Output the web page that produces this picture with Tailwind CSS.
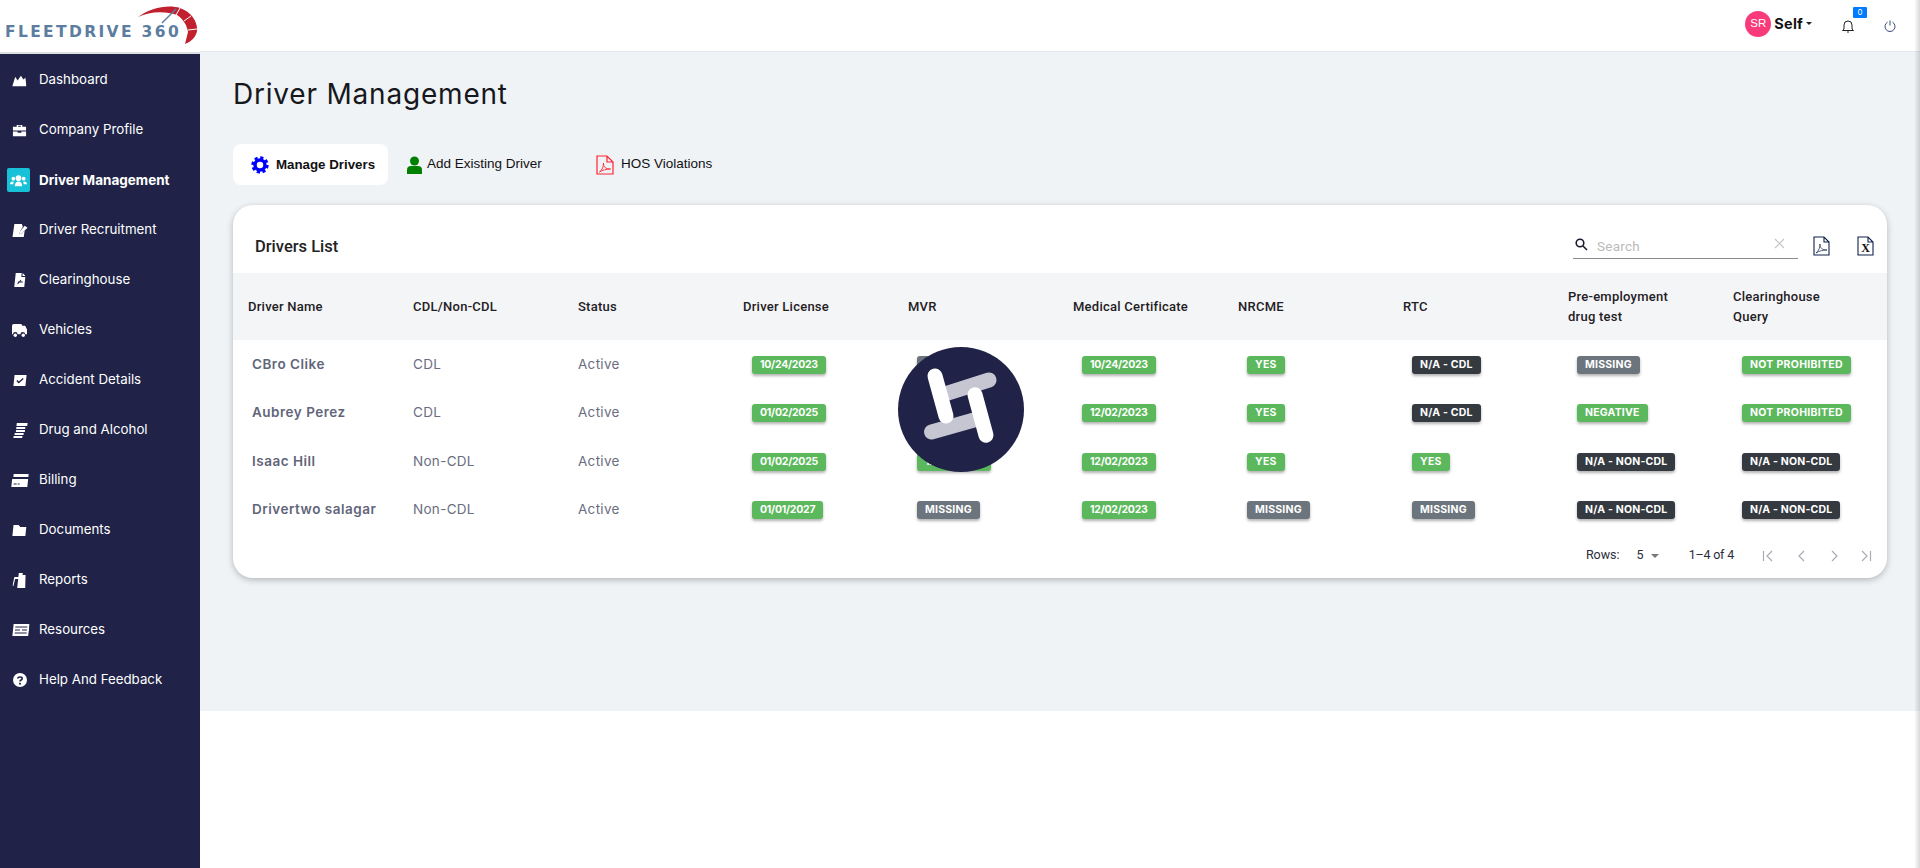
<!DOCTYPE html>
<html lang="en">
<head>
  <meta charset="UTF-8">
  <title>Driver Management</title>
  <script src="https://cdn.jsdelivr.net/npm/@tailwindcss/browser@4"></script>
</head>
<body class="bg-white font-['Inter',sans-serif] overflow-hidden">
  <div class="flex h-[868px] w-[1920px] relative">

    <!-- left column -->
    <div class="w-[200px] shrink-0 flex flex-col">
      <div class="h-[54px] border-b-2 border-[#dcdfe4] bg-white relative">
        <span class="absolute left-[5px] top-[24px] font-['DejaVu_Sans',sans-serif] font-bold text-[15.5px] leading-[16px] tracking-[2.35px] text-[#5c7d9f] whitespace-nowrap">FLEETDRIVE 360</span>
        <svg class="absolute left-[136px] top-[5px]" width="62" height="42" viewBox="0 0 62 42" fill="none">
          <path d="M2 12 C14 3 32 -1 44 3 C56 7 62 18 61 26 C60 32 55 37 49 39 L52 27 C51 20 47 14 41 10 C30 6 14 6 2 12Z" fill="#c1202f"/>
          <path d="M40 4 L26 18" stroke="#5c7d9f" stroke-width="1.500"/>
          <path d="M44 3 L40 10 M55 11 L48 16 M61 24 L52 25" stroke="#fff" stroke-width="1"/>
        </svg>
      </div>
      <nav class="flex-1 bg-[#202347] pt-px text-white text-[13.3px]">
        <a class="flex items-center h-[50px]">
          <span class="w-[39px] pl-[12px]"><svg class="w-[15px] h-[15px] -skew-x-6" viewBox="0 0 16 16" fill="#fff"><path d="M1 14 L3 4 L6 8 L9 3 L12 7 L14 5 L16 14Z"/></svg></span>Dashboard
        </a>
        <a class="flex items-center h-[50px]">
          <span class="w-[39px] pl-[12px]"><svg class="w-[15px] h-[15px]" viewBox="0 0 16 16" fill="#fff"><path d="M5 4V2h6v2h4v4H1V4zM6.500 4h3V3h-3zM1 9h5v1.500h4V9h5v5H1z"/></svg></span>Company Profile
        </a>
        <a class="flex items-center h-[50px] font-bold text-[13.5px]">
          <span class="w-[39px] pl-[7px]"><span class="flex w-[23px] h-[24px] rounded-[2px] bg-[#17c1d8] items-center justify-center"><svg class="w-[17px] h-[15px]" viewBox="0 0 18 16" fill="#fff"><circle cx="9" cy="5.500" r="3"/><circle cx="3.500" cy="6" r="2"/><circle cx="14.500" cy="6" r="2"/><path d="M5 14c0-3 1.500-5 4-5s4 2 4 5zM0 12c0-2 1-3 3-3l1 .5C3.500 10.500 3.500 11 3.500 12zM18 12c0-2-1-3-3-3l-1 .5c.5 1 .5 1.500.5 2.500z"/></svg></span></span>Driver Management
        </a>
        <a class="flex items-center h-[50px]">
          <span class="w-[39px] pl-[11px]"><svg class="w-[18px] h-[15px]" viewBox="0 0 18 16" fill="#fff"><path d="M3 1h8l1 3-3 5-1 3 3-1 3-3-1 7H1z"/><path d="M14 3l3 2-6 6-3 1 1-3z"/></svg></span>Driver Recruitment
        </a>
        <a class="flex items-center h-[50px]">
          <span class="w-[39px] pl-[13px]"><svg class="w-[14px] h-[16px] -skew-x-6" viewBox="0 0 14 16" fill="#fff"><path d="M2 1h6v4h4v10H2zM9 1l3 3H9z"/><path d="M5 12l3-4M5 10h5" stroke="#202347"/></svg></span>Clearinghouse
        </a>
        <a class="flex items-center h-[50px]">
          <span class="w-[39px] pl-[11px]"><svg class="w-[17px] h-[15px]" viewBox="0 0 18 16" fill="#fff"><path d="M1 3q0-2 2-2h7q2 0 2 2h3l2 4v5h-2a2.500 2.500 0 0 0-5 0H7a2.500 2.500 0 0 0-5 0H1z"/><circle cx="4.500" cy="13" r="1.800"/><circle cx="13" cy="13" r="1.800"/></svg></span>Vehicles
        </a>
        <a class="flex items-center h-[50px]">
          <span class="w-[39px] pl-[13px]"><svg class="w-[14px] h-[13px] -skew-x-6" viewBox="0 0 14 13" fill="#fff"><path d="M1 1h12v11H1z"/><path d="M4 6.500l2 2 4-4" stroke="#202347" stroke-width="1.500" fill="none"/></svg></span>Accident Details
        </a>
        <a class="flex items-center h-[50px]">
          <span class="w-[39px] pl-[14px]"><svg class="w-[13px] h-[15px] -skew-x-6" viewBox="0 0 13 15" fill="#fff"><path d="M2 0h11v3H2zM2 4h9v2H2zM2 7h9v2H2zM1 10h9v2H1zM0 13h9v2H0z"/></svg></span>Drug and Alcohol
        </a>
        <a class="flex items-center h-[50px]">
          <span class="w-[39px] pl-[11px]"><svg class="w-[18px] h-[13px] -skew-x-6" viewBox="0 0 18 13" fill="#fff"><path d="M2 0h15v3H2zM1 5h16v8H1z"/><path d="M3 10h3M7 10h2" stroke="#202347"/></svg></span>Billing
        </a>
        <a class="flex items-center h-[50px]">
          <span class="w-[39px] pl-[12px]"><svg class="w-[15px] h-[12px] -skew-x-6" viewBox="0 0 15 12" fill="#fff"><path d="M1 1h5l2 2h6v9H1z"/></svg></span>Documents
        </a>
        <a class="flex items-center h-[50px]">
          <span class="w-[39px] pl-[13px]"><svg class="w-[14px] h-[15px] -skew-x-6" viewBox="0 0 14 15" fill="#fff"><path d="M5 0h4v2h3l1 13H5V6H2l-1 7H0l1-9h4z"/></svg></span>Reports
        </a>
        <a class="flex items-center h-[50px]">
          <span class="w-[39px] pl-[12px]"><svg class="w-[17px] h-[12px] -skew-x-6" viewBox="0 0 17 12" fill="#fff"><path d="M1 0h16v12H1z"/><path d="M3 3h12M3 6h5M10 6h5M3 9h12" stroke="#202347"/></svg></span>Resources
        </a>
        <a class="flex items-center h-[50px]">
          <span class="w-[39px] pl-[13px]"><svg class="w-[14px] h-[14px]" viewBox="0 0 14 14"><circle cx="7" cy="7" r="7" fill="#fff"/><path d="M4.800 5.500C5 3.500 9.200 3.500 9.200 5.500 9.200 7 7 7 7 8.500" stroke="#202347" stroke-width="1.600" fill="none"/><rect x="6.100" y="9.800" width="1.800" height="1.800" fill="#202347"/></svg></span>Help And Feedback
        </a>
      </nav>
    </div>

    <!-- right column -->
    <div class="flex-1 flex flex-col min-w-0">
      <header class="h-[52px] shrink-0 bg-white border-b border-[#e3e7ee] flex items-center justify-end pr-[24px]">
        <span class="w-[26px] h-[26px] rounded-full bg-[#f93b7a] text-white text-[11.5px] font-['Liberation_Sans',sans-serif] flex items-center justify-center mb-[4px]">SR</span>
        <span class="ml-[3px] text-[14.5px] font-bold text-[#111] tracking-[0.2px] mb-[4px]">Self</span>
        <span class="ml-[3px] mb-[4px] border-x-[3px] border-x-transparent border-t-[3px] border-t-[#222]"></span>
        <span class="relative ml-[30px] w-[12px] h-[14px]">
          <svg class="w-[12px] h-[14px]" viewBox="0 0 12 14" fill="none" stroke="#222" stroke-width="1"><path d="M2 10V6a4 4 0 0 1 8 0v4l1.500 1.500h-11zM5 13h2"/></svg>
          <span class="absolute left-[11px] top-[-12px] w-[14px] h-[11px] rounded-[1px] bg-[#007bff] text-white text-[8px] leading-[11px] text-center">0</span>
        </span>
        <svg class="ml-[30px] w-[12px] h-[12px]" viewBox="0 0 12 12" fill="none" stroke="#3c4a80" stroke-width="1"><path d="M3.500 2.200a5 5 0 1 0 5 0M6 .5v5"/></svg>
      </header>

      <main class="h-[659px] shrink-0 bg-[#f0f3f6] pl-[33px] pr-[33px]">
        <h1 class="mt-[26px] h-[32px] text-[28px] leading-[32px] text-[#16181d] tracking-[0.8px]">Driver Management</h1>

        <div class="mt-[34px] flex items-center font-['Liberation_Sans',sans-serif] text-[13.5px] text-[#111] h-[41px]">
          <span class="w-[155px] h-[41px] rounded-[8px] bg-white flex items-center pl-[18px] font-semibold text-[13.3px]">
            <svg class="w-[18px] h-[18px] mr-[7px]" viewBox="0 0 18 18" fill="none" stroke="#0000ff"><circle cx="9" cy="9" r="5" stroke-width="3.500"/><circle cx="9" cy="9" r="7.400" stroke-width="2.600" stroke-dasharray="3.200 2.610"/></svg>Manage Drivers
          </span>
          <span class="w-[208px] flex items-center pl-[19px]">
            <svg class="w-[15px] h-[18px] mr-[5px]" viewBox="0 0 15 18" fill="#008000"><circle cx="7.500" cy="5" r="4.500"/><path d="M0 18v-4q0-4 4-4h7q4 0 4 4v4z"/></svg>Add Existing Driver
          </span>
          <span class="flex items-center">
            <svg class="w-[18px] h-[20px] mr-[7px]" viewBox="0 0 18 20" fill="none" stroke="#ff2330" stroke-width="1.200"><path d="M1 1h10l6 6v12H1zM11 1v6h6"/><path d="M3.500 17c3-2 4-6 4-9 0 4 2 6 7 6-4 0-8 1-11 3z" stroke-width="0.900"/></svg>HOS Violations
          </span>
        </div>

        <section class="mt-[20px] h-[373px] rounded-[20px] bg-white shadow-[0_2px_6px_rgba(0,0,0,0.25)] flex flex-col overflow-hidden">
          <div class="h-[68px] shrink-0 flex items-center justify-between pl-[22px] pr-[13px]">
            <h2 class="font-['Roboto',sans-serif] font-medium text-[16.5px] text-[#222] mt-[17px]">Drivers List</h2>
            <div class="flex items-center mt-[15px] h-[24px]">
              <div class="w-[225px] h-[24px] border-b border-[#8a8a8a] flex items-center font-['Roboto',sans-serif] text-[13.5px] text-[#bbb] tracking-[0.25px] relative">
                <svg class="ml-[2px] mr-[9px] w-[13px] h-[13px] mt-[-4px]" viewBox="0 0 13 13" fill="none" stroke="#1a1a2e" stroke-width="1.600"><circle cx="5" cy="5" r="3.800"/><path d="M8 8l4 4"/></svg>
                <span>Search</span>
                <svg class="absolute right-[13px] top-[3px] w-[11px] h-[11px]" viewBox="0 0 11 11" stroke="#c4c4c4" stroke-width="1.200"><path d="M1 1l9 9M10 1l-9 9"/></svg>
              </div>
              <svg class="ml-[15px] mt-[-1px] w-[17px] h-[20px]" viewBox="0 0 17 20" fill="none" stroke="#10204a" stroke-width="1.100"><path d="M1 1h10l5 5v13H1zM11 1v5h5"/><path d="M3 17c3-2 4-6 4-9 0 4 2 6 7 6-4 0-8 1-11 3z" stroke-width="0.700"/></svg>
              <span class="ml-[27px] mt-[-1px] relative w-[17px] h-[20px]">
                <svg class="w-[17px] h-[20px]" viewBox="0 0 17 20" fill="none" stroke="#10204a" stroke-width="1.100"><path d="M1 1h10l5 5v13H1zM11 1v5h5"/></svg>
                <span class="absolute left-0 right-0 top-[6px] text-center font-['Liberation_Serif',serif] font-bold text-[12px] leading-[12px] text-[#111]">X</span>
              </span>
            </div>
          </div>

          <div class="h-[67px] shrink-0 bg-[#f4f5f7] grid grid-cols-[repeat(10,165px)] items-center pl-[15px] font-['Roboto',sans-serif] font-medium text-[13px] leading-[20px] tracking-[0.25px] text-[#1f2024]">
            <span>Driver Name</span><span>CDL/Non-CDL</span><span>Status</span><span>Driver License</span><span>MVR</span><span>Medical Certificate</span><span>NRCME</span><span>RTC</span><span>Pre-employment<br>drug test</span><span>Clearinghouse<br>Query</span>
          </div>

          <div class="grid grid-cols-[repeat(10,165px)] auto-rows-[48.3px] items-center pl-[15px] text-[13.5px] tracking-[0.3px] text-[#6a6e80]">
            <span class="pl-[4px] font-semibold tracking-[0.5px] text-[#61657a]">CBro Clike</span><span>CDL</span><span>Active</span>
            <span class="pl-[9px] flex mt-[2px]"><b class="h-[18px] px-[8px] rounded-[3px] bg-[#5cb85c] text-white text-[10.5px] leading-[18px] font-bold shadow-[0_2px_3px_rgba(0,0,0,0.3)] tracking-[-0.25px]">10/24/2023</b></span>
            <span class="pl-[9px] flex mt-[2px]"><b class="h-[18px] px-[8px] rounded-[3px] bg-[#6c757d] text-white text-[10.5px] leading-[18px] font-bold shadow-[0_2px_3px_rgba(0,0,0,0.3)] tracking-[0.2px]">MISSING</b></span>
            <span class="pl-[9px] flex mt-[2px]"><b class="h-[18px] px-[8px] rounded-[3px] bg-[#5cb85c] text-white text-[10.5px] leading-[18px] font-bold shadow-[0_2px_3px_rgba(0,0,0,0.3)] tracking-[-0.25px]">10/24/2023</b></span>
            <span class="pl-[9px] flex mt-[2px]"><b class="h-[18px] px-[8px] rounded-[3px] bg-[#5cb85c] text-white text-[10.5px] leading-[18px] font-bold shadow-[0_2px_3px_rgba(0,0,0,0.3)] tracking-[0.2px]">YES</b></span>
            <span class="pl-[9px] flex mt-[2px]"><b class="h-[18px] px-[8px] rounded-[3px] bg-[#343a40] text-white text-[10.5px] leading-[18px] font-bold shadow-[0_2px_3px_rgba(0,0,0,0.3)] tracking-[0.2px]">N/A - CDL</b></span>
            <span class="pl-[9px] flex mt-[2px]"><b class="h-[18px] px-[8px] rounded-[3px] bg-[#6c757d] text-white text-[10.5px] leading-[18px] font-bold shadow-[0_2px_3px_rgba(0,0,0,0.3)] tracking-[0.2px]">MISSING</b></span>
            <span class="pl-[9px] flex mt-[2px]"><b class="h-[18px] px-[8px] rounded-[3px] bg-[#5cb85c] text-white text-[10.5px] leading-[18px] font-bold shadow-[0_2px_3px_rgba(0,0,0,0.3)] tracking-[0.3px]">NOT PROHIBITED</b></span>

            <span class="pl-[4px] font-semibold tracking-[0.5px] text-[#61657a]">Aubrey Perez</span><span>CDL</span><span>Active</span>
            <span class="pl-[9px] flex mt-[2px]"><b class="h-[18px] px-[8px] rounded-[3px] bg-[#5cb85c] text-white text-[10.5px] leading-[18px] font-bold shadow-[0_2px_3px_rgba(0,0,0,0.3)] tracking-[-0.25px]">01/02/2025</b></span>
            <span class="pl-[9px] flex mt-[2px]"><b class="h-[18px] px-[8px] rounded-[3px] bg-[#5cb85c] text-white text-[10.5px] leading-[18px] font-bold shadow-[0_2px_3px_rgba(0,0,0,0.3)] tracking-[-0.25px]">12/02/2023</b></span>
            <span class="pl-[9px] flex mt-[2px]"><b class="h-[18px] px-[8px] rounded-[3px] bg-[#5cb85c] text-white text-[10.5px] leading-[18px] font-bold shadow-[0_2px_3px_rgba(0,0,0,0.3)] tracking-[-0.25px]">12/02/2023</b></span>
            <span class="pl-[9px] flex mt-[2px]"><b class="h-[18px] px-[8px] rounded-[3px] bg-[#5cb85c] text-white text-[10.5px] leading-[18px] font-bold shadow-[0_2px_3px_rgba(0,0,0,0.3)] tracking-[0.2px]">YES</b></span>
            <span class="pl-[9px] flex mt-[2px]"><b class="h-[18px] px-[8px] rounded-[3px] bg-[#343a40] text-white text-[10.5px] leading-[18px] font-bold shadow-[0_2px_3px_rgba(0,0,0,0.3)] tracking-[0.2px]">N/A - CDL</b></span>
            <span class="pl-[9px] flex mt-[2px]"><b class="h-[18px] px-[8px] rounded-[3px] bg-[#5cb85c] text-white text-[10.5px] leading-[18px] font-bold shadow-[0_2px_3px_rgba(0,0,0,0.3)] tracking-[0.2px]">NEGATIVE</b></span>
            <span class="pl-[9px] flex mt-[2px]"><b class="h-[18px] px-[8px] rounded-[3px] bg-[#5cb85c] text-white text-[10.5px] leading-[18px] font-bold shadow-[0_2px_3px_rgba(0,0,0,0.3)] tracking-[0.3px]">NOT PROHIBITED</b></span>

            <span class="pl-[4px] font-semibold tracking-[0.5px] text-[#61657a]">Isaac Hill</span><span>Non-CDL</span><span>Active</span>
            <span class="pl-[9px] flex mt-[2px]"><b class="h-[18px] px-[8px] rounded-[3px] bg-[#5cb85c] text-white text-[10.5px] leading-[18px] font-bold shadow-[0_2px_3px_rgba(0,0,0,0.3)] tracking-[-0.25px]">01/02/2025</b></span>
            <span class="pl-[9px] flex mt-[2px]"><b class="h-[18px] px-[8px] rounded-[3px] bg-[#5cb85c] text-white text-[10.5px] leading-[18px] font-bold shadow-[0_2px_3px_rgba(0,0,0,0.3)] tracking-[-0.25px]">12/02/2023</b></span>
            <span class="pl-[9px] flex mt-[2px]"><b class="h-[18px] px-[8px] rounded-[3px] bg-[#5cb85c] text-white text-[10.5px] leading-[18px] font-bold shadow-[0_2px_3px_rgba(0,0,0,0.3)] tracking-[-0.25px]">12/02/2023</b></span>
            <span class="pl-[9px] flex mt-[2px]"><b class="h-[18px] px-[8px] rounded-[3px] bg-[#5cb85c] text-white text-[10.5px] leading-[18px] font-bold shadow-[0_2px_3px_rgba(0,0,0,0.3)] tracking-[0.2px]">YES</b></span>
            <span class="pl-[9px] flex mt-[2px]"><b class="h-[18px] px-[8px] rounded-[3px] bg-[#5cb85c] text-white text-[10.5px] leading-[18px] font-bold shadow-[0_2px_3px_rgba(0,0,0,0.3)] tracking-[0.2px]">YES</b></span>
            <span class="pl-[9px] flex mt-[2px]"><b class="h-[18px] px-[8px] rounded-[3px] bg-[#343a40] text-white text-[10.5px] leading-[18px] font-bold shadow-[0_2px_3px_rgba(0,0,0,0.3)] tracking-[0.2px]">N/A - NON-CDL</b></span>
            <span class="pl-[9px] flex mt-[2px]"><b class="h-[18px] px-[8px] rounded-[3px] bg-[#343a40] text-white text-[10.5px] leading-[18px] font-bold shadow-[0_2px_3px_rgba(0,0,0,0.3)] tracking-[0.2px]">N/A - NON-CDL</b></span>

            <span class="pl-[4px] font-semibold tracking-[0.5px] text-[#61657a]">Drivertwo salagar</span><span>Non-CDL</span><span>Active</span>
            <span class="pl-[9px] flex mt-[2px]"><b class="h-[18px] px-[8px] rounded-[3px] bg-[#5cb85c] text-white text-[10.5px] leading-[18px] font-bold shadow-[0_2px_3px_rgba(0,0,0,0.3)] tracking-[-0.25px]">01/01/2027</b></span>
            <span class="pl-[9px] flex mt-[2px]"><b class="h-[18px] px-[8px] rounded-[3px] bg-[#6c757d] text-white text-[10.5px] leading-[18px] font-bold shadow-[0_2px_3px_rgba(0,0,0,0.3)] tracking-[0.2px]">MISSING</b></span>
            <span class="pl-[9px] flex mt-[2px]"><b class="h-[18px] px-[8px] rounded-[3px] bg-[#5cb85c] text-white text-[10.5px] leading-[18px] font-bold shadow-[0_2px_3px_rgba(0,0,0,0.3)] tracking-[-0.25px]">12/02/2023</b></span>
            <span class="pl-[9px] flex mt-[2px]"><b class="h-[18px] px-[8px] rounded-[3px] bg-[#6c757d] text-white text-[10.5px] leading-[18px] font-bold shadow-[0_2px_3px_rgba(0,0,0,0.3)] tracking-[0.2px]">MISSING</b></span>
            <span class="pl-[9px] flex mt-[2px]"><b class="h-[18px] px-[8px] rounded-[3px] bg-[#6c757d] text-white text-[10.5px] leading-[18px] font-bold shadow-[0_2px_3px_rgba(0,0,0,0.3)] tracking-[0.2px]">MISSING</b></span>
            <span class="pl-[9px] flex mt-[2px]"><b class="h-[18px] px-[8px] rounded-[3px] bg-[#343a40] text-white text-[10.5px] leading-[18px] font-bold shadow-[0_2px_3px_rgba(0,0,0,0.3)] tracking-[0.2px]">N/A - NON-CDL</b></span>
            <span class="pl-[9px] flex mt-[2px]"><b class="h-[18px] px-[8px] rounded-[3px] bg-[#343a40] text-white text-[10.5px] leading-[18px] font-bold shadow-[0_2px_3px_rgba(0,0,0,0.3)] tracking-[0.2px]">N/A - NON-CDL</b></span>
          </div>

          <div class="mt-[13px] flex items-center justify-end pr-[15px] font-['Roboto',sans-serif] text-[12.5px] text-[#2a2d3a]">
            <span>Rows:</span>
            <span class="ml-[17px]">5</span>
            <span class="ml-[7px] mr-[30px] border-x-[4px] border-x-transparent border-t-[4px] border-t-[#777]"></span>
            <span class="mr-[28px] tracking-[-0.2px]">1–4 of 4</span>
            <svg class="w-[12px] h-[12px] mr-[23px]" viewBox="0 0 12 12" fill="none" stroke="#a9abb3" stroke-width="1.200"><path d="M1.500 1v10M10 1L5 6l5 5"/></svg>
            <svg class="w-[8px] h-[12px] mr-[26px]" viewBox="0 0 8 12" fill="none" stroke="#a9abb3" stroke-width="1.200"><path d="M7 1L2 6l5 5"/></svg>
            <svg class="w-[8px] h-[12px] mr-[21px]" viewBox="0 0 8 12" fill="none" stroke="#a9abb3" stroke-width="1.200"><path d="M1 1l5 5-5 5"/></svg>
            <svg class="w-[12px] h-[12px]" viewBox="0 0 12 12" fill="none" stroke="#a9abb3" stroke-width="1.200"><path d="M10.500 1v10M2 1l5 5-5 5"/></svg>
          </div>
        </section>
      </main>
    </div>

    <!-- loading spinner over the table -->
    <svg class="absolute left-[898px] top-[347px]" width="126" height="125" viewBox="0 0 126 125" stroke-linecap="round" stroke-width="15">
      <ellipse cx="63" cy="62.500" rx="63" ry="62.500" fill="#202347"/>
      <path d="M48 46.700L91 33M33.500 85L76 73" stroke="#c5c6d2"/>
      <path d="M37 29L48 69M77 47.700L88 88.300" stroke="#fff"/>
    </svg>

    <div class="absolute right-0 top-0 bottom-0 w-[6px] bg-gradient-to-r from-transparent to-black/15"></div>
  </div>
</body>
</html>
